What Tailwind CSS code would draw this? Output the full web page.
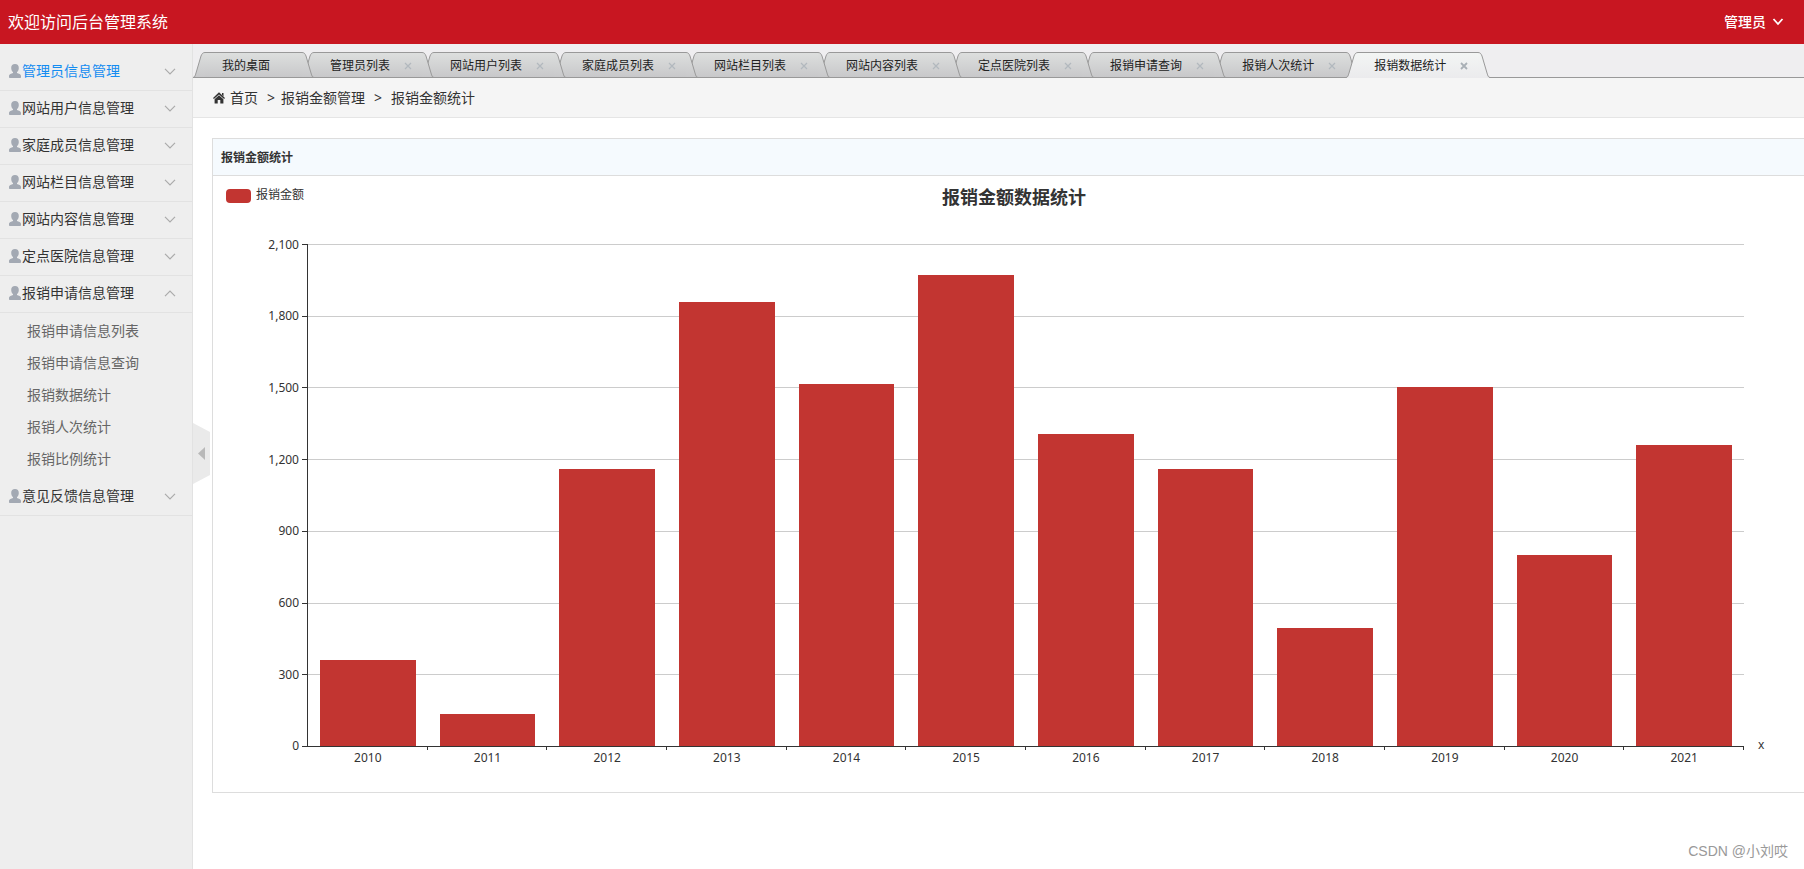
<!DOCTYPE html>
<html lang="zh-CN">
<head>
<meta charset="utf-8">
<meta name="viewport" content="width=device-width, initial-scale=1">
<title>后台管理系统</title>
<script src="https://cdn.jsdelivr.net/npm/@tailwindcss/browser@4"></script>
</head>
<body class="min-h-screen flex flex-col bg-white text-sm text-[#333] font-['Noto_Sans','Noto_Sans_CJK_SC',sans-serif]">
<svg class="absolute w-0 h-0" aria-hidden="true">
  <defs>
    <linearGradient id="tab-fill" gradientUnits="userSpaceOnUse" x1="0" y1="0" x2="0" y2="26"><stop offset="0" stop-color="#dddfde"/><stop offset="1" stop-color="#c8c8ca"/></linearGradient>
    <linearGradient id="tab-on" gradientUnits="userSpaceOnUse" x1="0" y1="0" x2="0" y2="26"><stop offset="0" stop-color="#f3f5f4"/><stop offset="1" stop-color="#ebebed"/></linearGradient>
  </defs>
  <symbol id="user" viewBox="0 0 12 14"><path d="M6 0C3.500 0 2.200 1.600 2.200 3.900C2.200 5.700 3 7.200 4 8V8.900L1.400 9.900C.3 10.400 0 11.100 0 12.200V13C0 13.600 .4 14 1 14H11C11.600 14 12 13.600 12 13V12.200C12 11.100 11.700 10.400 10.600 9.900L8 8.900V8C9 7.200 9.800 5.700 9.800 3.900C9.800 1.600 8.500 0 6 0Z" fill="#a3a9b3"/></symbol>
  <symbol id="down" viewBox="0 0 12 7"><path d="M1 .8L6 5.800L11 .8" fill="none" stroke="currentColor" stroke-width="1.200"/></symbol>
  <symbol id="up" viewBox="0 0 12 7"><path d="M1 6.200L6 1.200L11 6.200" fill="none" stroke="currentColor" stroke-width="1.200"/></symbol>
</svg>

<header class="h-11 bg-[#c81621] text-white flex items-center justify-between pl-2 pr-5">
  <h1 class="text-base">欢迎访问后台管理系统</h1>
  <button type="button" class="flex items-center gap-1.5 font-medium">管理员<svg class="w-3 h-2" viewBox="0 0 12 8"><path d="M1.500 1L6 6L10.500 1" fill="none" stroke="#fff" stroke-width="1.800"/></svg></button>
</header>

<div class="flex flex-1 min-w-0">
  <nav id="side" class="w-[193px] shrink-0 bg-[#eee] border-r border-[#e2e2e2] pt-2.5"></nav>

  <main class="relative flex-1 min-w-0 overflow-hidden">
    <div class="h-[34px] bg-[#efeef0] border-b border-[#999] pt-2 pl-1.5">
      <ul id="tabs" class="flex h-[26px] text-xs text-[#222]"></ul>
    </div>

    <div class="h-10 bg-[#f5f5f5] border-b border-[#e5e5e5] flex items-center pl-5">
      <svg class="w-3 h-3 mr-[5px]" viewBox="0 0 12 12"><path d="M6 .3L12 6L11.100 7.100L6 2.500L.9 7.100L0 6Z" fill="#333"/><path d="M6 3.200L10.400 7.200V11.500H7.300V8H4.700V11.500H1.600V7.200Z" fill="#333"/><path d="M9 1H10.500V4.500L9 3Z" fill="#333"/></svg>
      <a href="#">首页</a><span class="ml-[9px] mr-1.5">&gt;</span><a href="#">报销金额管理</a><span class="mx-[9px]">&gt;</span><span>报销金额统计</span>
    </div>

    <section class="mt-5 ml-[19px] -mr-4 border border-[#ddd]">
      <h2 class="h-[37px] flex items-center pl-2 pt-0.5 text-xs font-bold bg-[#f5fafe] border-b border-[#ddd]">报销金额统计</h2>
      <div class="h-[616px]">
        <div class="relative h-[68px]">
          <div class="text-lg font-bold text-center leading-5 pt-[11px] pr-1">报销金额数据统计</div>
          <div class="absolute left-[13px] top-[11px] flex items-end gap-[5px] text-xs"><span class="w-[25px] h-3.5 rounded bg-[#c23531]"></span>报销金额</div>
        </div>
        <div class="flex text-xs">
          <div id="ylabels" class="w-[86px] h-[503px] flex flex-col justify-between text-right"></div>
          <div class="w-[8px]"></div>
          <div class="relative flex-1 h-[503px] border-l border-b border-[#333]">
            <div id="lines" class="absolute inset-0 flex flex-col"></div>
            <div id="bars" class="relative h-full flex"></div>
            <div id="years" class="flex"></div>
          </div>
          <div class="w-[75px] h-[503px] flex items-end pl-3.5"><span class="leading-4 -mb-1.5">x</span></div>
        </div>
      </div>
    </section>

    <button type="button" aria-label="收起菜单" class="absolute left-0 top-[379px] w-[17px] h-[61px]">
      <svg class="w-full h-full" viewBox="0 0 17 61"><path d="M0 0L17 9V52L0 61Z" fill="#eaeaea"/><path d="M12 24V37L5 30.500Z" fill="#b9b9b9"/></svg>
    </button>
    <div class="absolute right-4 bottom-2 text-sm leading-5 text-[#999] font-['Liberation_Sans','Noto_Sans_CJK_SC',sans-serif]">CSDN @小刘哎</div>
  </main>
</div>

<script>
const menu = ['管理员信息管理','网站用户信息管理','家庭成员信息管理','网站栏目信息管理','网站内容信息管理','定点医院信息管理','报销申请信息管理','意见反馈信息管理'];
const sub = ['报销申请信息列表','报销申请信息查询','报销数据统计','报销人次统计','报销比例统计'];
document.getElementById('side').innerHTML = menu.map((m, i) => `
  <button type="button" class="w-full h-[37px] flex items-center border-b border-[#e2e2e2] pl-[9px] pr-4 pb-0.5 ${i === 0 ? 'text-[#148cf1]' : ''}">
    <svg class="w-3 h-3.5 mr-px"><use href="#user"/></svg>${m}
    <svg class="w-3 h-[7px] ml-auto text-[#aaa]"><use href="#${i === 6 ? 'up' : 'down'}"/></svg>
  </button>${i === 6 ? `<ul class="pt-0.5 pb-1">${sub.map(s => `<li><a href="#" class="flex items-center h-8 pl-[27px] text-[#666]">${s}</a></li>`).join('')}</ul>` : ''}`).join('');

const tabs = ['我的桌面','管理员列表','网站用户列表','家庭成员列表','网站栏目列表','网站内容列表','定点医院列表','报销申请查询','报销人次统计','报销数据统计'];
document.getElementById('tabs').innerHTML = tabs.map((t, i) => {
  const on = i === tabs.length - 1, fill = on ? 'url(#tab-on)' : 'url(#tab-fill)';
  const mid = on ? 'bg-linear-to-b from-[#f3f5f4] to-[#ebebed]' : 'bg-linear-to-b from-[#dddfde] to-[#c8c8ca]';
  return `<li class="relative flex items-center pt-0.5 ${i ? 'pl-[22px]' : 'pl-[23px] pr-[38px]'}" style="z-index:${on ? 20 : 10 - i}">
    <div class="absolute inset-y-0 -inset-x-1.5 flex">
      <svg class="w-3 h-[26px] shrink-0" viewBox="0 0 12 26"><path d="M0 26C2 25 2 24 3 21L8 4C9 1.500 10 .5 12 .5V26Z" fill="${fill}"/><path d="M0 25.500C2 25 2 24 3 21L8 4C9 1.500 10 .5 12 .5" fill="none" stroke="#999"/></svg>
      <div class="flex-1 border-t border-t-[#999] ${mid} ${on ? '' : 'border-b border-b-[#999]'}"></div>
      <svg class="w-3 h-[26px] shrink-0" viewBox="0 0 12 26"><path d="M12 26C10 25 10 24 9 21L4 4C3 1.500 2 .5 0 .5V26Z" fill="${fill}"/><path d="M12 25.500C10 25 10 24 9 21L4 4C3 1.500 2 .5 0 .5" fill="none" stroke="#999"/></svg>
      ${on ? '' : '<div class="absolute bottom-0 inset-x-0 h-px bg-[#999]"></div>'}
    </div>
    <a href="#" class="relative whitespace-nowrap">${t}</a>${i ? `<button type="button" aria-label="关闭" class="relative ml-3.5 mr-4"><svg class="w-2 h-2" viewBox="0 0 8 8"><path d="M1 1L7 7M7 1L1 7" stroke="${on ? '#a9b0b6' : '#b2b8be'}" stroke-width="${on ? 1.800 : 1.200}"/></svg></button>` : ''}
  </li>`;
}).join('');

const data = [358,136,1157,1857,1513,1970,1304,1157,493,1500,800,1261], max = 2100;
const ticks = [2100,1800,1500,1200,900,600,300,0];
document.getElementById('ylabels').innerHTML = ticks.map(v => `<div class="h-px flex items-center justify-end">${v.toLocaleString('en-US')}</div>`).join('');
document.getElementById('lines').innerHTML = ticks.slice(1).map(() => `<div class="relative flex-1 border-t border-[#ccc]"><i class="absolute -left-1.5 -top-px w-1.5 h-px bg-[#333]"></i></div>`).join('') + '<i class="absolute -left-1.5 -bottom-px w-1.5 h-px bg-[#333]"></i>';
document.getElementById('bars').innerHTML = data.map(v => `<div class="flex-1 flex items-end justify-center"><div class="w-4/5 bg-[#c23531]" style="height:${v / max * 100}%"></div></div>`).join('');
document.getElementById('years').innerHTML = data.map((v, i) => `<div class="relative flex-1 text-center leading-6">${2010 + i}<i class="absolute right-0 top-0 w-px h-1 bg-[#333]"></i></div>`).join('');
</script>
</body>
</html>
